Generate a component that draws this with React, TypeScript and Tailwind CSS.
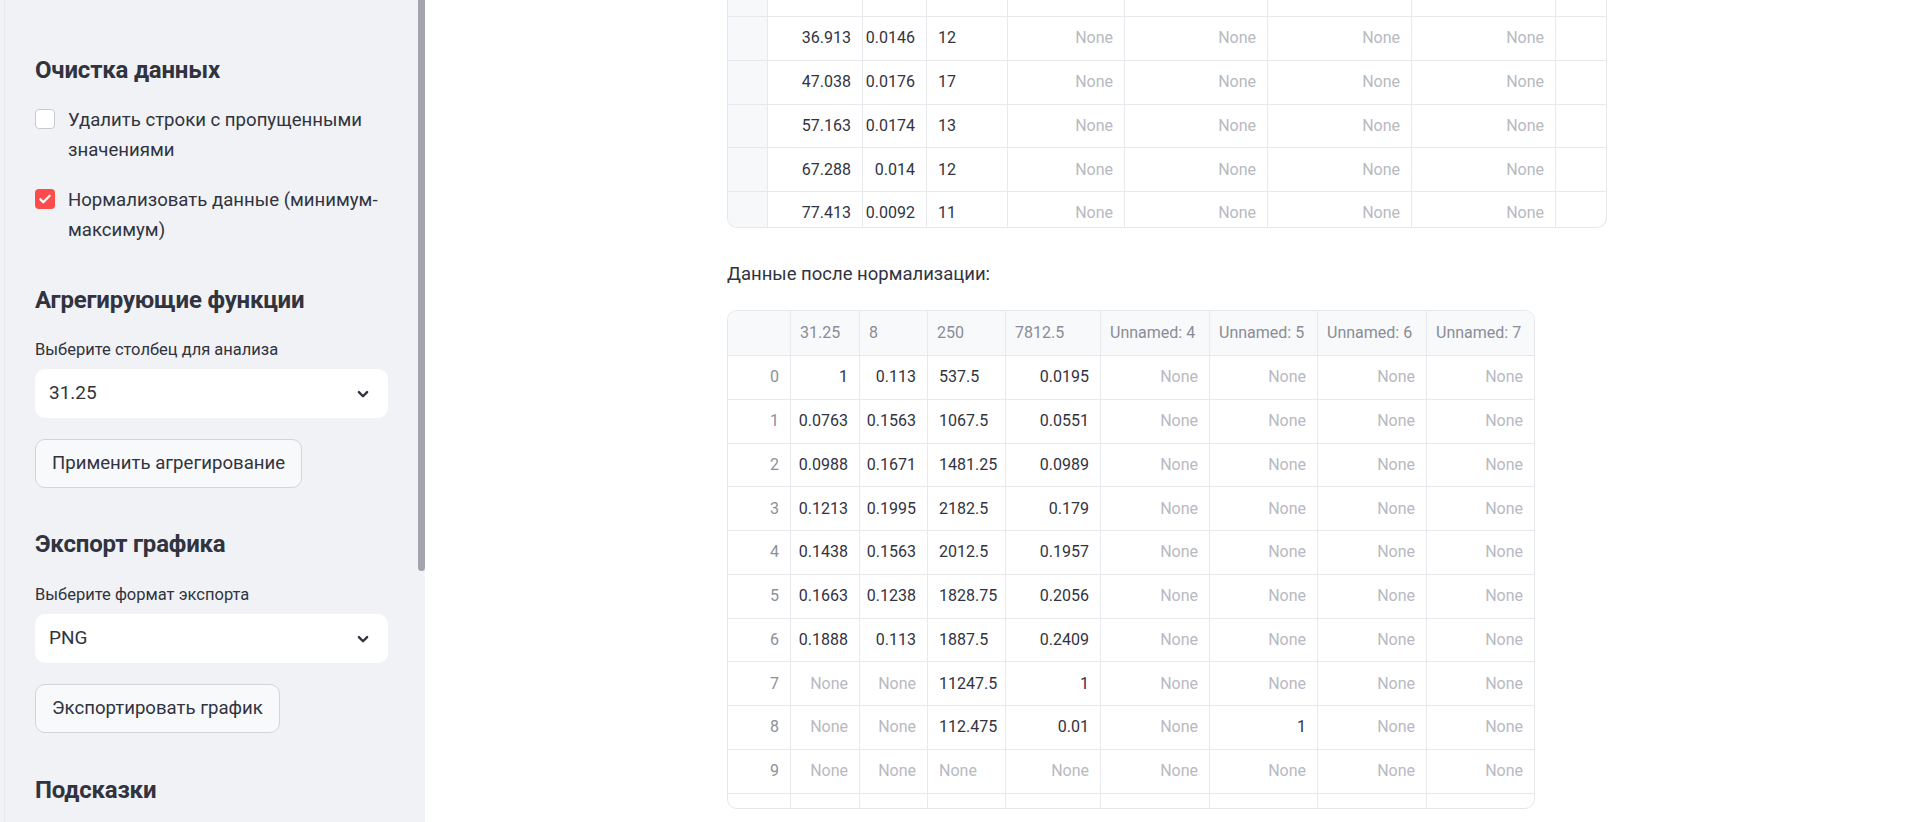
import React from "react";

const dark = "text-[#31333f]";

function Checkbox({ checked }: { checked: boolean }) {
  if (checked) {
    return (
      <div className="w-[20px] h-[20px] rounded-[4px] bg-[#ff4b4b] flex items-center justify-center shrink-0 mt-[4px]">
        <svg width="14" height="14" viewBox="0 0 24 24" fill="none" stroke="white" strokeWidth="4" strokeLinecap="round" strokeLinejoin="round">
          <path d="M4 12.5l5 5L20 6.5" />
        </svg>
      </div>
    );
  }
  return <div className="w-[20px] h-[20px] rounded-[4px] bg-white border border-[#c9cbd2] shrink-0 mt-[4px]" />;
}

function Chevron() {
  return (
    <svg width="18" height="18" viewBox="0 0 24 24" fill="none" stroke="#31333f" strokeWidth="3.2" strokeLinecap="round" strokeLinejoin="round">
      <path d="M6.5 9.5l5.5 5.5 5.5-5.5" />
    </svg>
  );
}

function Select({ value }: { value: string }) {
  return (
    <div className="h-[49px] w-full bg-white rounded-[10px] flex items-center justify-between pl-[14px] pr-[16px]">
      <span className={`text-[19px] ${dark}`}>{value}</span>
      <Chevron />
    </div>
  );
}

function Button({ label }: { label: string }) {
  return (
    <div className={`h-[49px] inline-flex items-center px-[16px] rounded-[10px] border border-[#d3d4d9] bg-[#f8f9fb] text-[18.6px] ${dark} self-start`}>
      {label}
    </div>
  );
}

function Heading({ children, mt }: { children: React.ReactNode; mt: string }) {
  return (
    <div className={`${mt} h-[40px] flex items-center text-[24px] font-bold ${dark} tracking-[-0.2px]`}>{children}</div>
  );
}

function Sidebar() {
  return (
    <div className="w-[425px] h-full bg-[#f0f2f6] pl-[4px] relative shrink-0">
      <div className="h-full border-l border-[#e7e9ee] pl-[30px] pr-[37px] flex flex-col">
        <Heading mt="mt-[50px]">Очистка данных</Heading>
        <div className="mt-[15px] flex gap-[13px]">
          <Checkbox checked={false} />
          <div className={`text-[18.6px] leading-[30px] ${dark}`}>
            <div className="whitespace-nowrap">Удалить строки с пропущенными</div>
            <div className="whitespace-nowrap">значениями</div>
          </div>
        </div>
        <div className="mt-[20px] flex gap-[13px]">
          <Checkbox checked={true} />
          <div className={`text-[18.6px] leading-[30px] ${dark}`}>
            <div className="whitespace-nowrap">Нормализовать данные (минимум-</div>
            <div className="whitespace-nowrap">максимум)</div>
          </div>
        </div>
        <Heading mt="mt-[35px]">Агрегирующие функции</Heading>
        <div className={`mt-[18px] h-[24px] flex items-center text-[16.5px] ${dark}`}>Выберите столбец для анализа</div>
        <div className="mt-[7px]">
          <Select value="31.25" />
        </div>
        <div className="mt-[21px] flex">
          <Button label="Применить агрегирование" />
        </div>
        <Heading mt="mt-[36px]">Экспорт графика</Heading>
        <div className={`mt-[19px] h-[24px] flex items-center text-[16.5px] ${dark}`}>Выберите формат экспорта</div>
        <div className="mt-[7px]">
          <Select value="PNG" />
        </div>
        <div className="mt-[21px] flex">
          <Button label="Экспортировать график" />
        </div>
        <Heading mt="mt-[37px]">Подсказки</Heading>
      </div>
      <div className="absolute right-0 top-0 w-[7px] h-[571px] bg-[#a4a4ae] rounded-b-[4px]" />
    </div>
  );
}

type Cell = { v: string; align: "l" | "r"; kind: "data" | "none" | "idx" | "empty" };

function cellClass(c: Cell, last: boolean, extra = "") {
  const color =
    c.kind === "none" ? "text-[#b8b9c1]" : c.kind === "idx" ? "text-[#8d8f99]" : "text-[#31333f]";
  return `h-full flex items-center ${c.align === "r" ? "justify-end" : "justify-start"} px-[11px] ${
    last ? "" : "border-r border-[#e8e9ed]"
  } whitespace-nowrap overflow-hidden ${color} ${extra}`;
}

function topCells(vals: string[]): Cell[] {
  return [
    { v: "", align: "r", kind: "empty" },
    { v: vals[0] ?? "", align: "r", kind: "data" },
    { v: vals[1] ?? "", align: "r", kind: "data" },
    { v: vals[2] ?? "", align: "l", kind: "data" },
    { v: vals.length ? "None" : "", align: "r", kind: "none" },
    { v: vals.length ? "None" : "", align: "r", kind: "none" },
    { v: vals.length ? "None" : "", align: "r", kind: "none" },
    { v: vals.length ? "None" : "", align: "r", kind: "none" },
    { v: "", align: "r", kind: "empty" },
  ];
}

function TopTable() {
  const rows = [
    [],
    ["36.913", "0.0146", "12"],
    ["47.038", "0.0176", "17"],
    ["57.163", "0.0174", "13"],
    ["67.288", "0.014", "12"],
    ["77.413", "0.0092", "11"],
  ];
  return (
    <div className="w-[880px] h-[228px] border-x border-b border-[#e6e7eb] rounded-b-[10px] overflow-hidden">
      <div className="-mt-[26.75px]">
        {rows.map((r, i) => {
          const cells = topCells(r);
          return (
            <div
              key={i}
              className="grid grid-cols-[40px_95px_64px_81px_117px_143px_144px_144px_1fr] h-[43.75px] border-b-[1.5px] border-[#e8e9ed] text-[16px]"
            >
              {cells.map((c, j) => (
                <div key={j} className={cellClass(c, j === cells.length - 1, j === 0 ? "bg-[#f7f8fa]" : "")}>
                  {c.v}
                </div>
              ))}
            </div>
          );
        })}
      </div>
    </div>
  );
}

const headers = ["", "31.25", "8", "250", "7812.5", "Unnamed: 4", "Unnamed: 5", "Unnamed: 6", "Unnamed: 7"];

const data2: string[][] = [
  ["0", "1", "0.113", "537.5", "0.0195"],
  ["1", "0.0763", "0.1563", "1067.5", "0.0551"],
  ["2", "0.0988", "0.1671", "1481.25", "0.0989"],
  ["3", "0.1213", "0.1995", "2182.5", "0.179"],
  ["4", "0.1438", "0.1563", "2012.5", "0.1957"],
  ["5", "0.1663", "0.1238", "1828.75", "0.2056"],
  ["6", "0.1888", "0.113", "1887.5", "0.2409"],
  ["7", "None", "None", "11247.5", "1"],
  ["8", "None", "None", "112.475", "0.01", "None", "1", "None", "None"],
  ["9", "None", "None", "None", "None"],
];

function rowCells(r: string[] | null): Cell[] {
  const out: Cell[] = [];
  for (let j = 0; j < 9; j++) {
    if (!r) {
      out.push({ v: "", align: "r", kind: "empty" });
      continue;
    }
    const v = r[j] ?? "None";
    const align: "l" | "r" = j === 3 ? "l" : "r";
    const kind: Cell["kind"] = j === 0 ? "idx" : v === "None" ? "none" : "data";
    out.push({ v, align, kind });
  }
  return out;
}

const grid2 = "grid grid-cols-[63px_69px_68px_78px_95px_109px_108px_109px_1fr]";

function NormTable() {
  const rows: (string[] | null)[] = [...data2, null];
  return (
    <div className="w-[808px] h-[499px] border border-[#e6e7eb] rounded-[10px] overflow-hidden">
      <div className={`${grid2} h-[45px] bg-[#f8f9fb] border-b-[1.5px] border-[#e8e9ed] text-[16px] text-[#8a8c97]`}>
        {headers.map((h, j) => (
          <div
            key={j}
            className={`h-full flex items-center px-[9px] whitespace-nowrap overflow-hidden ${
              j === headers.length - 1 ? "" : "border-r border-[#e8e9ed]"
            }`}
          >
            {h}
          </div>
        ))}
      </div>
      {rows.map((r, i) => {
        const cells = rowCells(r);
        return (
          <div key={i} className={`${grid2} h-[43.75px] border-b-[1.5px] border-[#e8e9ed] text-[16px]`}>
            {cells.map((c, j) => (
              <div key={j} className={cellClass(c, j === cells.length - 1)}>
                {c.v}
              </div>
            ))}
          </div>
        );
      })}
    </div>
  );
}

export default function App() {
  return (
    <div className="w-[1909px] h-[822px] flex overflow-hidden bg-white font-['Roboto','Noto_Sans',sans-serif]">
      <Sidebar />
      <div className="flex-1 pl-[302px] flex flex-col">
        <TopTable />
        <div className="mt-[31px] h-[32px] flex items-center text-[18.5px] text-[#31333f]">Данные после нормализации:</div>
        <div className="mt-[19px]">
          <NormTable />
        </div>
      </div>
    </div>
  );
}
